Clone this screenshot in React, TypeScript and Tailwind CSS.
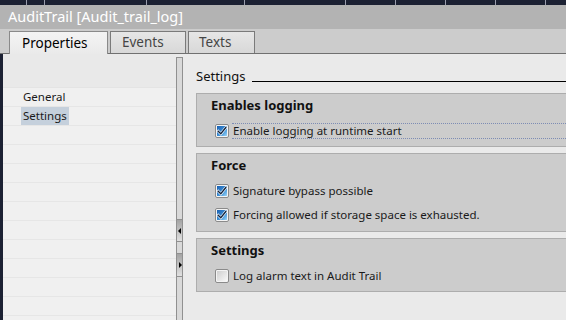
import React from "react";

const font = { fontFamily: '"Noto Sans", "Open Sans", sans-serif' };

function CheckBox({ checked }: { checked: boolean }) {
  return (
    <svg width="14" height="14" viewBox="0 0 14 14" className="shrink-0">
      <defs>
        <linearGradient id="cbOn" x1="0" y1="0" x2="1" y2="1">
          <stop offset="0" stopColor="#1a5fb0" />
          <stop offset="0.6" stopColor="#3f93d8" />
          <stop offset="1" stopColor="#9fd6f6" />
        </linearGradient>
        <linearGradient id="cbOff" x1="0" y1="0" x2="1" y2="1">
          <stop offset="0" stopColor="#cfcfcf" />
          <stop offset="1" stopColor="#f8f8f8" />
        </linearGradient>
      </defs>
      <rect x="0.5" y="0.5" width="13" height="13" rx="1.5" fill="#f4f4f4" stroke="#8a8a8a" />
      <rect x="2" y="2" width="10" height="10" fill={checked ? "url(#cbOn)" : "url(#cbOff)"} />
      {checked && (
        <>
          <path d="M3.2 7.2 L5.8 9.8 L10.8 3.6" fill="none" stroke="#ffffff" strokeWidth="2.6" strokeLinecap="square" />
          <path d="M3.2 7.2 L5.8 9.8 L10.8 3.6" fill="none" stroke="#10233f" strokeWidth="1.4" strokeLinecap="square" />
        </>
      )}
    </svg>
  );
}

function Row({ checked, label, focused }: { checked: boolean; label: string; focused?: boolean }) {
  return (
    <div className="flex items-center h-[16px] pl-[18px]">
      <CheckBox checked={checked} />
      <div
        className={
          "ml-[3px] flex-1 h-[16px] flex items-center pl-[1px] text-[11.5px] text-[#1a1a1a] " +
          (focused ? "border-y border-dotted border-[#7d8cb4]" : "")
        }
      >
        {label}
      </div>
    </div>
  );
}

function Group({ title, children, pb }: { title: string; children: React.ReactNode; pb: string }) {
  return (
    <div className={"bg-[#cccccc] border border-[#adadad] border-r-0 " + pb}>
      <div className="pl-[14px] h-[24px] flex items-center text-[13px] font-bold text-[#111]">{title}</div>
      <div className="mt-[5px]">{children}</div>
    </div>
  );
}

export default function App() {
  const cols = [27, 18, 102, 98, 101, 50, 50, 50, 50, 50];
  return (
    <div className="w-[566px] h-[320px] overflow-hidden flex flex-col bg-[#eaeaea]" style={font}>
      <div className="h-[5px] bg-[#1c2133] flex shrink-0">
        {cols.map((w, i) => (
          <div key={i} className="h-full border-r border-[#9a9eae] shrink-0" style={{ width: w }} />
        ))}
      </div>
      <div className="h-[24px] bg-[#b3b3b3] flex items-center pl-[8px] text-white text-[14.5px] shrink-0">
        AuditTrail [Audit_trail_log]
      </div>
      <div className="h-[25px] bg-[#cccccc] border-b border-[#707070] flex items-end pl-[9px] gap-[2px] shrink-0">
        <div className="w-[99px] h-[23px] -mb-px bg-gradient-to-b from-[#f4f4f4] to-[#eaeaea] border border-b-0 border-[#8a8a8a] pl-[12px] flex items-center text-[13.5px] text-black">
          Properties
        </div>
        <div className="w-[76px] h-[22px] bg-gradient-to-b from-[#e6e6e6] to-[#d8d8d8] border border-b-0 border-[#7a7a7a] flex items-center pl-[11px] text-[13.5px] text-[#454545]">
          Events
        </div>
        <div className="w-[67px] h-[22px] bg-gradient-to-b from-[#e6e6e6] to-[#d8d8d8] border border-b-0 border-[#7a7a7a] flex items-center pl-[10px] text-[13.5px] text-[#454545]">
          Texts
        </div>
      </div>
      <div className="flex-1 flex min-h-0">
        <div className="w-[3px] bg-[#1c2133] shrink-0" />
        <div className="w-[173px] shrink-0 bg-[#f0f0f0] flex flex-col">
          <div className="h-[34px] bg-[#e9e9e9] border-b border-[#e4e4e4] shrink-0" />
          {["General", "Settings", "", "", "", "", "", "", "", "", "", ""].map((t, i) => (
            <div key={i} className="h-[19px] border-b border-[#e6e6e6] flex items-center pl-[18px] shrink-0">
              {t && (
                <span
                  className={
                    "text-[11.5px] text-[#1a1a1a] px-[2px] h-[18px] flex items-center " +
                    (t === "Settings" ? "bg-[#c5d0dc]" : "")
                  }
                >
                  {t}
                </span>
              )}
            </div>
          ))}
        </div>
        <div className="w-[7px] shrink-0 bg-[#eaeaea] flex flex-col pt-[3px]">
          <div className="flex-1 border-x border-t border-[#909090] bg-[#d9d9d9] flex flex-col">
            <div className="h-[161px] shrink-0" />
            <div className="h-[23px] shrink-0 border-y border-[#909090] bg-gradient-to-b from-[#a4a4a4] to-[#e0e0e0] flex items-center justify-center">
              <svg width="4" height="6" viewBox="0 0 4 6">
                <path d="M3 0 L0 3 L3 6 Z" fill="#000" />
              </svg>
            </div>
            <div className="h-[11px] shrink-0" />
            <div className="h-[24px] shrink-0 border-y border-[#909090] bg-gradient-to-b from-[#a4a4a4] to-[#e0e0e0] flex items-center justify-center">
              <svg width="4" height="6" viewBox="0 0 4 6">
                <path d="M1 0 L4 3 L1 6 Z" fill="#000" />
              </svg>
            </div>
          </div>
        </div>
        <div className="flex-1 pl-[13px] flex flex-col">
          <div className="h-[39px] shrink-0 flex items-start pt-[13px]">
            <span className="text-[13px] leading-[18px] text-[#111]">Settings</span>
            <div className="flex-1 ml-[7px] mt-[14px] h-px bg-black" />
          </div>
          <div className="flex flex-col gap-[6px]">
            <Group title="Enables logging" pb="pb-[7px]">
              <Row checked label="Enable logging at runtime start" focused />
            </Group>
            <Group title="Force" pb="pb-[8px]">
              <div className="flex flex-col gap-[8px]">
                <Row checked label="Signature bypass possible" />
                <Row checked label="Forcing allowed if storage space is exhausted." />
              </div>
            </Group>
            <Group title="Settings" pb="pb-[7px]">
              <Row checked={false} label="Log alarm text in Audit Trail" />
            </Group>
          </div>
        </div>
      </div>
    </div>
  );
}
